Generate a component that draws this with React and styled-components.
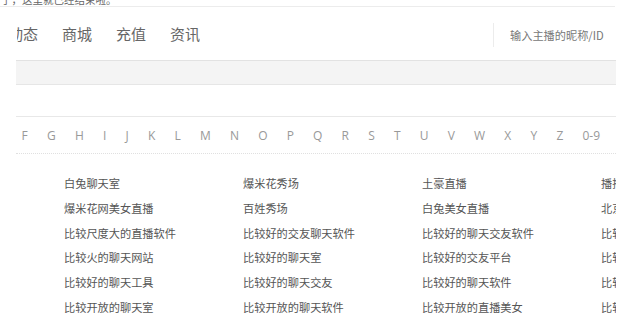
import React from 'react';
import styled, {createGlobalStyle} from 'styled-components';

const GlobalStyle = createGlobalStyle`
	body {
		margin: 0;
		background: #fff;
		font-family: "Noto Sans CJK SC", "Noto Sans", sans-serif;
	}
`

const navItems = ["动态", "商城", "充值", "资讯"];
const letters = ["F","G","H","I","J","K","L","M","N","O","P","Q","R","S","T","U","V","W","X","Y","Z","0-9"];
const links = [
	"白兔聊天室", "爆米花秀场", "土豪直播", "播播秀场",
	"爆米花网美女直播", "百姓秀场", "白兔美女直播", "北京聊天室",
	"比较尺度大的直播软件", "比较好的交友聊天软件", "比较好的聊天交友软件", "比较好的直播平台",
	"比较火的聊天网站", "比较好的聊天室", "比较好的交友平台", "比较好的交友网站",
	"比较好的聊天工具", "比较好的聊天交友", "比较好的聊天软件", "比较好的直播软件",
	"比较开放的聊天室", "比较开放的聊天软件", "比较开放的直播美女", "比较开放的直播平台"
];

const App = () => {
	return (
	<Page>
		<GlobalStyle />
		<Notice>了，这里就已经结束啦。</Notice>
		<Header>
			<Nav>
				{navItems.map((item, i) => <NavItem key={i} $first={i === 0}>{item}</NavItem>)}
			</Nav>
			<Search>输入主播的昵称/ID</Search>
		</Header>
		<Content>
			<GrayBar />
			<LetterRow>
				{letters.map(l => <Letter key={l}>{l}</Letter>)}
			</LetterRow>
			<LinkGrid>
				{links.map((l, i) => <LinkItem key={i}>{l}</LinkItem>)}
			</LinkGrid>
		</Content>
	</Page>
	)
}

const Page = styled.div`
	width: 640px;
	height: 319px;
	overflow: hidden;
`

const Notice = styled.div`
	width: 615px;
	margin-top: -7px;
	height: 13px;
	font-size: 10.5px;
	line-height: 13px;
	color: #666;
	border-bottom: 1px solid #ececec;
	white-space: nowrap;
	text-indent: 1px;
	overflow: hidden;
`

const Header = styled.div`
	display: flex;
	align-items: center;
	justify-content: space-between;
	width: 616px;
	height: 53px;
`

const Nav = styled.div`
	display: flex;
	margin-left: 17px;
	overflow: hidden;
	gap: 24px;
`

const NavItem = styled.span`
	font-size: 15px;
	color: #666;
	white-space: nowrap;
	margin-left: ${props => props.$first ? "-9px" : "0"};
`

const Search = styled.div`
	width: 106px;
	height: 24px;
	margin-top: 2px;
	border-left: 1px solid #ececec;
	padding-left: 16px;
	font-size: 11.2px;
	line-height: 24px;
	color: #777;
	white-space: nowrap;
`

const Content = styled.div`
	width: 600px;
	margin-left: 16px;
	overflow: hidden;
`

const GrayBar = styled.div`
	height: 23px;
	background: #f4f4f4;
	border-top: 1px solid #e2e2e2;
	border-bottom: 1px solid #e6e6e6;
`

const LetterRow = styled.div`
	display: flex;
	align-items: center;
	height: 36px;
	margin-top: 31px;
	border-top: 1px solid #e8e8e8;
	border-bottom: 1px dotted #e0e0e0;
	& > span:first-child {
		margin-left: -4px;
	}
`

const Letter = styled.span`
	font-family: "Open Sans", "Noto Sans", sans-serif;
	font-size: 12px;
	color: #999;
	padding: 0 9.6px;
`

const LinkGrid = styled.div`
	display: grid;
	grid-template-columns: repeat(4, 179px);
	width: 716px;
	padding-left: 48px;
	padding-top: 17px;
`

const LinkItem = styled.div`
	font-size: 11.2px;
	line-height: 24.8px;
	color: #555;
	white-space: nowrap;
	overflow: hidden;
`

export default App;
